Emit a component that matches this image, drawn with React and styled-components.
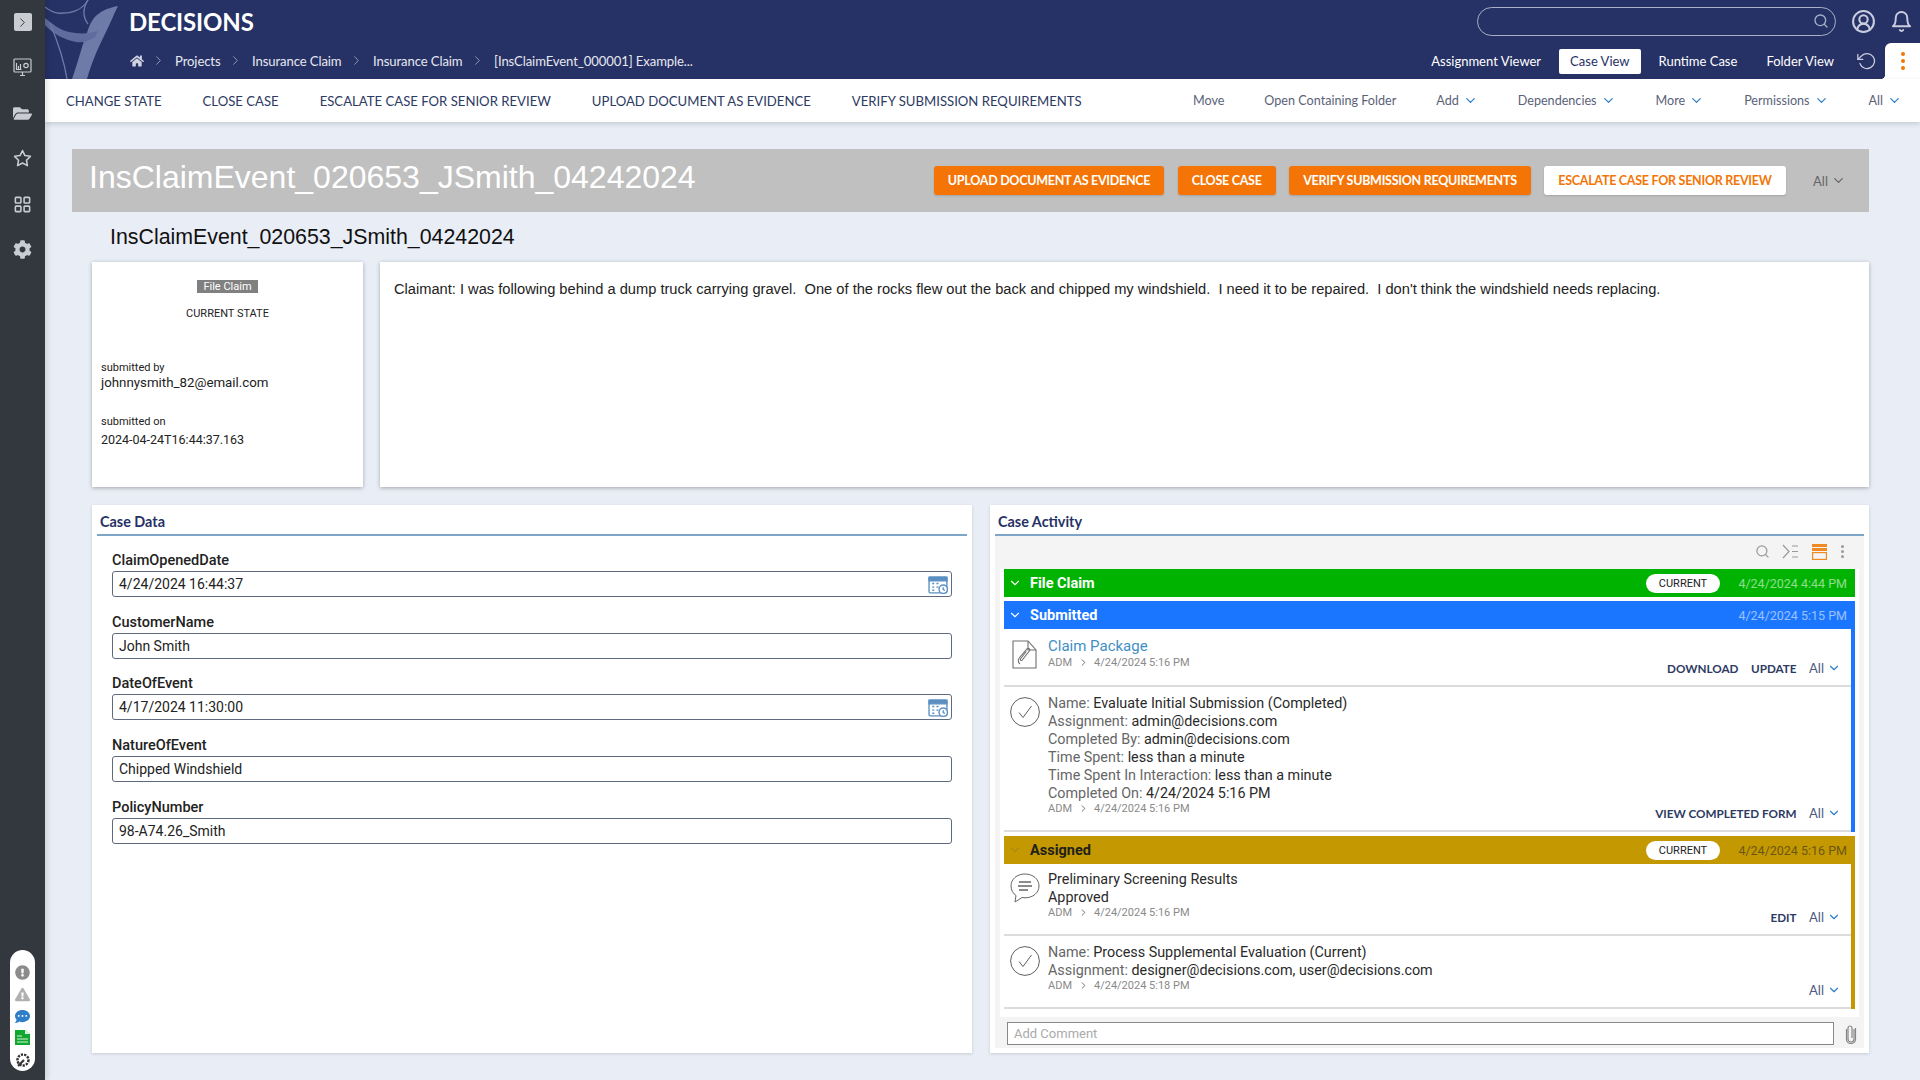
import React from "react";
import styled, { createGlobalStyle } from "styled-components";
import { FaHome, FaFolderOpen, FaCog, FaExclamationCircle, FaExclamationTriangle, FaCommentDots } from "react-icons/fa";
import { FiSearch, FiStar, FiChevronRight, FiChevronDown, FiBell, FiRotateCcw } from "react-icons/fi";
import { LuLayoutGrid, LuCircleUserRound } from "react-icons/lu";

const GlobalStyle = createGlobalStyle`
  html, body {
    margin: 0;
    padding: 0;
    height: 100%;
    overflow: hidden;
    background: #e9edf5;
    font-family: "Roboto", "Liberation Sans", sans-serif;
  }
  * { box-sizing: border-box; }
`;

const SIDE_ICONS = [
  { key: "folder", icon: <FaFolderOpen /> },
  { key: "star", icon: <FiStar /> },
  { key: "grid", icon: <LuLayoutGrid /> },
  { key: "gear", icon: <FaCog /> },
];

const CRUMBS = ["Projects", "Insurance Claim", "Insurance Claim", "[InsClaimEvent_000001] Example..."];
const TABS = ["Assignment Viewer", "Case View", "Runtime Case", "Folder View"];
const LEFT_ACTIONS = ["CHANGE STATE", "CLOSE CASE", "ESCALATE CASE FOR SENIOR REVIEW", "UPLOAD DOCUMENT AS EVIDENCE", "VERIFY SUBMISSION REQUIREMENTS"];
const RIGHT_ACTIONS = [
  { label: "Move" },
  { label: "Open Containing Folder" },
  { label: "Add", caret: true },
  { label: "Dependencies", caret: true },
  { label: "More", caret: true },
  { label: "Permissions", caret: true },
  { label: "All", caret: true },
];
const FIELDS = [
  { label: "ClaimOpenedDate", value: "4/24/2024 16:44:37", date: true },
  { label: "CustomerName", value: "John Smith" },
  { label: "DateOfEvent", value: "4/17/2024 11:30:00", date: true },
  { label: "NatureOfEvent", value: "Chipped Windshield" },
  { label: "PolicyNumber", value: "98-A74.26_Smith" },
];
const COMPLETED = [
  ["Name:", "Evaluate Initial Submission (Completed)"],
  ["Assignment:", "admin@decisions.com"],
  ["Completed By:", "admin@decisions.com"],
  ["Time Spent:", "less than a minute"],
  ["Time Spent In Interaction:", "less than a minute"],
  ["Completed On:", "4/24/2024 5:16 PM"],
];
const CURRENT = [
  ["Name:", "Process Supplemental Evaluation (Current)"],
  ["Assignment:", "designer@decisions.com, user@decisions.com"],
];

const Logo = () => (
  <LogoWrap viewBox="0 0 80 79" aria-hidden="true">
    <path d="M73 6 C62 8 54 12 49 18 C45 23 43 29 42 33 C38 42 33 62 27 79 L42 79 C46 64 52 50 60 34 C65 24 69 14 73 6 Z" fill="#6d7ba8" />
    <path d="M0 18 C8 24 14 30 24 32 C34 34 44 34 53 31 L50 37 C44 41 38 43 31 42 C20 40 8 34 0 25 Z" fill="#5f6d9e" />
    <path d="M0 7 C6 12 12 14 18 13 C28 13 38 9 43 0" fill="none" stroke="#6d7ba8" strokeWidth="1.300" />
    <path d="M43 0 C38 8 37 16 43 24" fill="none" stroke="#6d7ba8" strokeWidth="1.300" />
    <path d="M5 23 C12 40 19 60 22 79" fill="none" stroke="#6d7ba8" strokeWidth="1.300" />
  </LogoWrap>
);

const MonitorIcon = () => (
  <svg width="19" height="19" viewBox="0 0 19 19" fill="none" stroke="#c9ccd0" strokeWidth="1.2">
    <rect x="1" y="1" width="17" height="13" rx="1" />
    <path d="M3.5 5v6.5h5M5.5 11V8M7.5 11V6" />
    <circle cx="13" cy="7.5" r="2.2" />
    <path d="M7 17.5h5M9.5 14v3.5" />
  </svg>
);

const CalendarIcon = () => (
  <CalendarSvg viewBox="0 0 20 20" fill="none" stroke="#5b8fc2" strokeWidth="1.3">
    <rect x="1" y="3" width="17" height="15" rx="1" />
    <path d="M1 3h17v3.5H1z" fill="#5b8fc2" />
    <path d="M4 9h2M8 9h2M4 12.5h2M8 12.5h2M4 15.5h2" />
    <circle cx="14.5" cy="14.5" r="4" fill="#fff" />
    <path d="M14.5 12.5v2.2l1.5 1" />
  </CalendarSvg>
);

const FileClipIcon = () => (
  <svg width="25" height="29" viewBox="0 0 25 29" fill="none" stroke="#6f6f6f" strokeWidth="1.100">
    <path d="M1 1h15l8 9v18H1z" />
    <path d="M16 1v9h8" />
    <path d="M8 24c-2.500-2-2-4.500 0-7l7-8c1.500-1.500 3.500 0 2.300 2l-7 9c-1 1.200-2.500 0-1.500-1.500l5.500-7" />
  </svg>
);

const CheckCircle = () => (
  <svg width="30" height="30" viewBox="0 0 30 30" fill="none" stroke="#5f5f5f" strokeWidth="1">
    <circle cx="15" cy="15" r="14.400" />
    <path d="M9 15.500l4 5L21.500 9" />
  </svg>
);

const CommentIcon = () => (
  <svg width="30" height="30" viewBox="0 0 30 30" fill="none" stroke="#666" strokeWidth="1">
    <path d="M15 1C7 1 1 6 1 13c0 4 2 7.500 5 9.500L5 29l7-4.500c1 .2 2 .3 3 .3 8 0 14-5 14-11.800S23 1 15 1z" />
    <path d="M9 9h12M8 13h14M9 17h9" strokeWidth="1.400" />
  </svg>
);

const NotesIcon = () => (
  <svg width="15" height="15" viewBox="0 0 15 15">
    <path d="M0 0h10l5 4v11H0z" fill="#10a82f" />
    <path d="M10 0v4h5z" fill="#d8f0dc" />
    <path d="M2 6h5M2 9h11M2 12h11" stroke="#d8f0dc" strokeWidth="1.200" />
  </svg>
);

const ToolsIcon = () => (
  <svg width="16" height="16" viewBox="0 0 16 16" fill="none" stroke="#333">
    <circle cx="8" cy="8" r="5.500" strokeDasharray="2.200 1.100" strokeWidth="2.500" />
    <path d="M3 14l6-6" strokeWidth="2.200" />
  </svg>
);

const RowsIcon = () => (
  <svg width="15" height="16" viewBox="0 0 15 16">
    <path d="M0 0h15v3H0zM0 4h15v3H0z" fill="#f08a24" />
    <rect x=".6" y="8.600" width="13.800" height="6.800" fill="none" stroke="#f08a24" strokeWidth="1.200" />
  </svg>
);

const ListToggleIcon = () => (
  <svg width="17" height="15" viewBox="0 0 17 15" fill="none" stroke="#9a9a9a" strokeWidth="1.200">
    <path d="M1 1l6 6.500L1 14M10 2h6M10 7.500h6M10 13h6" />
  </svg>
);

const ClipIcon = () => (
  <svg width="12" height="20" viewBox="0 0 12 20" fill="none" stroke="#858585" strokeWidth="1.200">
    <path d="M9 5v10a3 3 0 0 1-6 0V4a2 2 0 0 1 4 0v10" />
    <path d="M1.500 5v10.500a4.500 4 0 0 0 9 0V4" />
  </svg>
);

const AllMenu = ({ label = "All" }) => (
  <AllLink>
    {label}
    <FiChevronDown />
  </AllLink>
);

const Meta = ({ date }) => (
  <MetaLine>
    ADM
    <FiChevronRight />
    {date}
  </MetaLine>
);

const Section = ({ color, title, date, current, muted, children }) => (
  <SectionWrap>
    <SectionBar $color={color} $muted={muted}>
      <FiChevronDown />
      <SectionTitle>{title}</SectionTitle>
      {current && <CurrentPill>CURRENT</CurrentPill>}
      <SectionDate>{date}</SectionDate>
    </SectionBar>
    <SectionBody $color={color}>{children}</SectionBody>
  </SectionWrap>
);

const App = () => {
  return (
    <Page>
      <GlobalStyle />
      <Sidebar>
        <ExpandButton>
          <FiChevronRight />
        </ExpandButton>
        <SideIcon>
          <MonitorIcon />
        </SideIcon>
        {SIDE_ICONS.map((item) => (
          <SideIcon key={item.key}>{item.icon}</SideIcon>
        ))}
        <ToolPill>
          <FaExclamationCircle color="#8c8c8c" />
          <FaExclamationTriangle color="#b0b0b0" />
          <FaCommentDots color="#2f7fc8" />
          <NotesIcon />
          <ToolsIcon />
        </ToolPill>
      </Sidebar>

      <Main>
        <Header>
          <Logo />
          <HeaderRow>
            <Brand>DECISIONS</Brand>
            <SearchBox>
              <FiSearch />
            </SearchBox>
            <HeaderIcon $size={25}>
              <LuCircleUserRound />
            </HeaderIcon>
            <HeaderIcon $size={23}>
              <FiBell />
            </HeaderIcon>
          </HeaderRow>
          <HeaderRow>
            <Breadcrumbs>
              <FaHome />
              {CRUMBS.map((crumb, i) => (
                <React.Fragment key={i}>
                  <FiChevronRight />
                  <span>{crumb}</span>
                </React.Fragment>
              ))}
            </Breadcrumbs>
            <Tabs>
              {TABS.map((tab) => (
                <Tab key={tab} $active={tab === "Case View"}>
                  {tab}
                </Tab>
              ))}
            </Tabs>
            <RefreshIcon>
              <FiRotateCcw />
            </RefreshIcon>
            <KebabTab>
              <i />
              <i />
              <i />
            </KebabTab>
          </HeaderRow>
        </Header>

        <ActionBar>
          {LEFT_ACTIONS.map((a) => (
            <ActionLink key={a}>{a}</ActionLink>
          ))}
          <ActionRight>
            {RIGHT_ACTIONS.map((a) => (
              <ActionMenu key={a.label}>
                {a.label}
                {a.caret && <FiChevronDown />}
              </ActionMenu>
            ))}
          </ActionRight>
        </ActionBar>

        <Content>
          <TitleBar>
            <TitleText>InsClaimEvent_020653_JSmith_04242024</TitleText>
            <OrangeButton>UPLOAD DOCUMENT AS EVIDENCE</OrangeButton>
            <OrangeButton>CLOSE CASE</OrangeButton>
            <OrangeButton>VERIFY SUBMISSION REQUIREMENTS</OrangeButton>
            <OrangeButton $light>ESCALATE CASE FOR SENIOR REVIEW</OrangeButton>
            <TitleAll>
              All
              <FiChevronDown />
            </TitleAll>
          </TitleBar>
          <SubTitle>InsClaimEvent_020653_JSmith_04242024</SubTitle>

          <Inner>
            <TopRow>
              <StateCard>
                <StateChip>File Claim</StateChip>
                <StateLabel>CURRENT STATE</StateLabel>
                <SmallLabel>submitted by</SmallLabel>
                <SmallValue>johnnysmith_82@email.com</SmallValue>
                <SmallLabel $gap={25}>submitted on</SmallLabel>
                <SmallValue $gap={4} $size={12.5}>2024-04-24T16:44:37.163</SmallValue>
              </StateCard>
              <ClaimCard>
                Claimant: I was following behind a dump truck carrying gravel.&nbsp; One of the rocks flew out the back and
                chipped my windshield.&nbsp; I need it to be repaired.&nbsp; I don't think the windshield needs replacing.
              </ClaimCard>
            </TopRow>

            <BottomRow>
              <Panel>
                <PanelTitle>Case Data</PanelTitle>
                <FieldList>
                  {FIELDS.map((f) => (
                    <Field key={f.label}>
                      <FieldLabel>{f.label}</FieldLabel>
                      <FieldInput>
                        {f.value}
                        {f.date && <CalendarIcon />}
                      </FieldInput>
                    </Field>
                  ))}
                </FieldList>
              </Panel>

              <Panel>
                <PanelTitle>Case Activity</PanelTitle>
                <ActivityArea>
                  <ActivityTools>
                    <FiSearch />
                    <ListToggleIcon />
                    <RowsIcon />
                    <ToolDots>
                      <i />
                      <i />
                      <i />
                    </ToolDots>
                  </ActivityTools>
                  <Timeline>
                    <Section color="#00b300" title="File Claim" date="4/24/2024 4:44 PM" current />
                    <Section color="#1a75ff" title="Submitted" date="4/24/2024 5:15 PM">
                      <ActivityRow $height={58} $pad={7}>
                        <RowIcon $top={4} $left={8}>
                          <FileClipIcon />
                        </RowIcon>
                        <RowText>
                          <FileLink>Claim Package</FileLink>
                          <Meta date="4/24/2024 5:16 PM" />
                        </RowText>
                        <RowActions>
                          <ActionWord>DOWNLOAD</ActionWord>
                          <ActionWord>UPDATE</ActionWord>
                          <AllMenu />
                        </RowActions>
                      </ActivityRow>
                      <ActivityRow $height={145}>
                        <RowIcon $top={2}>
                          <CheckCircle />
                        </RowIcon>
                        <RowText>
                          {COMPLETED.map(([k, v]) => (
                            <InfoLine key={k}>
                              {k} <b>{v}</b>
                            </InfoLine>
                          ))}
                          <Meta date="4/24/2024 5:16 PM" />
                        </RowText>
                        <RowActions>
                          <ActionWord>VIEW COMPLETED FORM</ActionWord>
                          <AllMenu />
                        </RowActions>
                      </ActivityRow>
                    </Section>
                    <Section color="#c49800" title="Assigned" date="4/24/2024 5:16 PM" current muted>
                      <ActivityRow $height={72} $pad={7}>
                        <RowIcon $top={2}>
                          <CommentIcon />
                        </RowIcon>
                        <RowText>
                          <InfoLine><b>Preliminary Screening Results</b></InfoLine>
                          <InfoLine><b>Approved</b></InfoLine>
                          <Meta date="4/24/2024 5:16 PM" />
                        </RowText>
                        <RowActions>
                          <ActionWord>EDIT</ActionWord>
                          <AllMenu />
                        </RowActions>
                      </ActivityRow>
                      <ActivityRow $height={73}>
                        <RowIcon $top={2}>
                          <CheckCircle />
                        </RowIcon>
                        <RowText>
                          {CURRENT.map(([k, v]) => (
                            <InfoLine key={k}>
                              {k} <b>{v}</b>
                            </InfoLine>
                          ))}
                          <Meta date="4/24/2024 5:18 PM" />
                        </RowText>
                        <RowActions>
                          <AllMenu />
                        </RowActions>
                      </ActivityRow>
                    </Section>
                  </Timeline>
                  <CommentRow>
                    <CommentBox>Add Comment</CommentBox>
                    <ClipIcon />
                  </CommentRow>
                </ActivityArea>
              </Panel>
            </BottomRow>
          </Inner>
        </Content>
      </Main>
    </Page>
  );
};

const Page = styled.div`
  display: flex;
  width: 1920px;
  height: 1080px;
  overflow: hidden;
  background: #e9edf5;
`;

const Sidebar = styled.div`
  width: 45px;
  flex-shrink: 0;
  background: #32383e;
  display: flex;
  flex-direction: column;
  align-items: center;
  padding-top: 13px;
  position: relative;
  box-shadow: 3px 0 5px rgba(0, 0, 0, 0.1);
  z-index: 3;
`;

const ExpandButton = styled.div`
  width: 18px;
  height: 18px;
  border-radius: 2px;
  background: #c9ccd0;
  color: #32383e;
  display: flex;
  align-items: center;
  justify-content: center;
  font-size: 15px;
  margin-bottom: 27px;
  svg {
    stroke-width: 1.500px;
  }
`;

const SideIcon = styled.div`
  height: 19px;
  margin-bottom: 26.500px;
  color: #c9ccd0;
  font-size: 19px;
  display: flex;
  align-items: center;
  justify-content: center;
`;

const ToolPill = styled.div`
  position: absolute;
  left: 10px;
  top: 950px;
  width: 25px;
  height: 121px;
  border-radius: 13px;
  background: #fff;
  display: flex;
  flex-direction: column;
  align-items: center;
  justify-content: space-between;
  padding: 15px 0 3px;
  font-size: 15px;
`;

const Main = styled.div`
  flex: 1;
  min-width: 0;
  display: flex;
  flex-direction: column;
`;

const Header = styled.div`
  position: relative;
  height: 79px;
  background: #263165;
  color: #fff;
  overflow: hidden;
  font-family: "Lato", sans-serif;
`;

const LogoWrap = styled.svg`
  position: absolute;
  left: 0;
  top: 0;
  width: 80px;
  height: 79px;
`;

const HeaderRow = styled.div`
  position: relative;
  display: flex;
  align-items: center;
  padding-left: 84px;
  &:first-of-type {
    height: 43px;
  }
  height: 36px;
`;

const Brand = styled.div`
  font-size: 24px;
  font-weight: 700;
  letter-spacing: -0.15px;
  flex: 1;
`;

const SearchBox = styled.div`
  width: 359px;
  height: 29px;
  border: 1px solid #a9b0c8;
  border-radius: 15px;
  display: flex;
  align-items: center;
  justify-content: flex-end;
  padding-right: 6px;
  color: #a9b0c8;
  font-size: 16px;
  margin: -1px 11px 0 0;
`;

const HeaderIcon = styled.div`
  display: flex;
  color: #c9cde0;
  font-size: ${(p) => p.$size}px;
  margin-right: 7px;
  margin-left: 4px;
  &:last-child {
    margin-left: 7px;
  }
`;

const Breadcrumbs = styled.div`
  display: flex;
  align-items: center;
  flex: 1;
  font-size: 13.100px;
  color: #e6e8f0;
  margin-top: -1px;
  letter-spacing: -0.1px;
  & > svg:first-child {
    color: #cfd3e2;
    font-size: 14px;
    margin-left: 1px;
    margin-right: 7px;
  }
  & > svg {
    color: #a9b0cc;
    font-size: 15px;
    stroke-width: 1.300px;
    margin-right: 9px;
  }
  & > span {
    margin-right: 7.500px;
  }
`;

const Tabs = styled.div`
  display: flex;
  align-items: center;
  font-size: 13px;
  margin-right: 5px;
`;

const Tab = styled.div`
  height: 25px;
  padding: 0 11px;
  margin-right: 7px;
  line-height: 25px;
  border-radius: 2px;
  white-space: nowrap;
  background: ${(p) => (p.$active ? "#fff" : "transparent")};
  color: ${(p) => (p.$active ? "#263165" : "#fff")};
`;

const RefreshIcon = styled.div`
  display: flex;
  font-size: 20px;
  color: #c9cde0;
  margin-right: 8px;
  svg {
    stroke-width: 1.500px;
  }
`;

const KebabTab = styled.div`
  position: relative;
  width: 35px;
  height: 36px;
  background: #fff;
  border-top-left-radius: 6px;
  display: flex;
  flex-direction: column;
  align-items: center;
  justify-content: center;
  gap: 3px;
  &::before {
    content: "";
    position: absolute;
    left: -5px;
    bottom: 0;
    width: 5px;
    height: 5px;
    background: radial-gradient(circle at 0 0, transparent 5px, #fff 5.500px);
  }
  i {
    width: 4px;
    height: 4px;
    border-radius: 50%;
    background: #f47506;
  }
`;

const ActionBar = styled.div`
  position: relative;
  height: 43px;
  flex-shrink: 0;
  background: #fff;
  display: flex;
  align-items: center;
  padding: 0 18px 0 21px;
  gap: 41px;
  font-family: "Lato", sans-serif;
  font-size: 13.150px;
  box-shadow: 0 2px 5px rgba(0, 0, 0, 0.15);
  z-index: 2;
`;

const ActionLink = styled.div`
  color: #2d3a63;
  white-space: nowrap;
`;

const ActionRight = styled.div`
  margin-left: auto;
  display: flex;
  align-items: center;
  gap: 40px;
`;

const ActionMenu = styled.div`
  display: flex;
  align-items: center;
  gap: 4px;
  color: #5a6278;
  font-size: 12.600px;
  white-space: nowrap;
  svg {
    color: #2f7fc8;
    font-size: 15px;
  }
`;

const Content = styled.div`
  flex: 1;
  min-height: 0;
  padding: 27px 51px 0 27px;
`;

const TitleBar = styled.div`
  height: 63px;
  background: #c0c0c0;
  display: flex;
  align-items: center;
  padding: 0 23px 0 17px;
`;

const TitleText = styled.div`
  flex: 1;
  font-family: "Liberation Sans", sans-serif;
  font-size: 32px;
  color: #fff;
  padding-bottom: 7px;
`;

const OrangeButton = styled.div`
  height: 29px;
  line-height: 29px;
  padding: 0 14px;
  margin-right: 13.500px;
  border-radius: 3px;
  font-family: "Lato", sans-serif;
  font-size: 12.500px;
  font-weight: 700;
  letter-spacing: -0.27px;
  white-space: nowrap;
  background: ${(p) => (p.$light ? "#fff" : "#f47506")};
  color: ${(p) => (p.$light ? "#f47506" : "#fff")};
  box-shadow: 0 1px 2px rgba(0, 0, 0, 0.15);
`;

const TitleAll = styled.div`
  display: flex;
  align-items: center;
  gap: 3px;
  margin-left: 14px;
  font-family: "Lato", sans-serif;
  font-size: 13px;
  color: #666;
  svg {
    font-size: 15px;
  }
`;

const SubTitle = styled.div`
  height: 50px;
  line-height: 50px;
  padding-left: 38px;
  font-family: "Liberation Sans", sans-serif;
  font-size: 21.350px;
  color: #111;
`;

const Inner = styled.div`
  padding-left: 20px;
`;

const TopRow = styled.div`
  display: flex;
  gap: 17px;
  height: 225px;
`;

const StateCard = styled.div`
  width: 271px;
  background: #fff;
  padding: 18px 9px 0;
  display: flex;
  flex-direction: column;
  box-shadow: 0 1px 4px rgba(0, 0, 0, 0.3);
`;

const StateChip = styled.div`
  align-self: center;
  background: #808080;
  color: #fff;
  font-size: 11px;
  line-height: 13px;
  padding: 0 6px;
`;

const StateLabel = styled.div`
  align-self: center;
  margin-top: 14px;
  margin-bottom: 41px;
  font-size: 11px;
  line-height: 13px;
  color: #222;
`;

const SmallLabel = styled.div`
  font-size: 11px;
  line-height: 13px;
  color: #222;
  margin-top: ${(p) => p.$gap || 0}px;
`;

const SmallValue = styled.div`
  font-size: ${(p) => p.$size || 13.3}px;
  line-height: 15px;
  color: #222;
  margin-top: ${(p) => p.$gap || 1}px;
`;

const ClaimCard = styled.div`
  flex: 1;
  background: #fff;
  padding: 18px 14px;
  font-family: "Liberation Sans", sans-serif;
  font-size: 14.670px;
  line-height: 18px;
  color: #222;
  box-shadow: 0 1px 4px rgba(0, 0, 0, 0.3);
`;

const BottomRow = styled.div`
  display: grid;
  grid-template-columns: 880px 879px;
  gap: 18px;
  margin-top: 18px;
  height: 548px;
`;

const Panel = styled.div`
  background: #fff;
  padding: 0 5px 5px;
  display: flex;
  flex-direction: column;
  box-shadow: 0 1px 3px rgba(0, 0, 0, 0.15);
`;

const PanelTitle = styled.div`
  height: 31px;
  flex-shrink: 0;
  line-height: 33px;
  padding-left: 3px;
  border-bottom: 2px solid #7ea6c9;
  font-family: "Lato", sans-serif;
  font-size: 14.400px;
  font-weight: 700;
  color: #263165;
`;

const FieldList = styled.div`
  padding: 16px 15px 0 15px;
`;

const Field = styled.div`
  height: 61.700px;
`;

const FieldLabel = styled.div`
  font-size: 14.500px;
  line-height: 17px;
  font-weight: 500;
  color: #222;
`;

const FieldInput = styled.div`
  margin-top: 2px;
  height: 26px;
  border: 1px solid #5e6a80;
  border-radius: 3px;
  padding: 0 6px;
  display: flex;
  align-items: center;
  justify-content: space-between;
  font-size: 14px;
  color: #222;
`;

const CalendarSvg = styled.svg`
  width: 21px;
  height: 21px;
  margin-right: -4px;
`;

const ActivityArea = styled.div`
  flex: 1;
  min-height: 0;
  background: #f4f4f4;
  display: flex;
  flex-direction: column;
`;

const ActivityTools = styled.div`
  height: 33px;
  flex-shrink: 0;
  display: flex;
  align-items: center;
  justify-content: flex-end;
  gap: 12.500px;
  padding: 0 20px 2px 0;
  color: #9a9a9a;
  font-size: 15px;
`;

const ToolDots = styled.div`
  display: flex;
  flex-direction: column;
  gap: 2px;
  margin-left: 2px;
  i {
    width: 3px;
    height: 3px;
    border-radius: 50%;
    background: #9a9a9a;
  }
`;

const Timeline = styled.div`
  margin: 0 5px 0 5px;
  padding: 0 4px 8px;
  background: #fff;
  display: flex;
  flex-direction: column;
  gap: 4px;
`;

const SectionWrap = styled.div`
  display: flex;
  flex-direction: column;
`;

const SectionBar = styled.div`
  height: 28px;
  background: ${(p) => p.$color};
  display: flex;
  align-items: center;
  padding: 0 8px 0 4px;
  color: ${(p) => (p.$muted ? "#1f1f1f" : "#fff")};
  & > svg {
    font-size: 14px;
    margin-right: 8px;
    color: ${(p) => (p.$muted ? "#ad8a12" : "#fff")};
  }
`;

const SectionTitle = styled.div`
  flex: 1;
  font-size: 14.500px;
  font-weight: 700;
`;

const CurrentPill = styled.div`
  width: 74px;
  height: 19px;
  line-height: 19px;
  border-radius: 10px;
  background: #fff;
  color: #222;
  text-align: center;
  font-size: 11px;
  margin-right: 18px;
`;

const SectionDate = styled.div`
  width: 109px;
  text-align: right;
  font-size: 12.500px;
  opacity: 0.55;
`;

const SectionBody = styled.div`
  border-right: ${(p) => (p.children ? `4px solid ${p.$color}` : "none")};
`;

const ActivityRow = styled.div`
  min-height: ${(p) => p.$height}px;
  display: flex;
  border-bottom: 2px solid #dcdcdc;
  padding: ${(p) => p.$pad || 8}px 10px 8px 0;
`;

const RowIcon = styled.div`
  width: 44px;
  padding-top: ${(p) => p.$top}px;
  padding-left: ${(p) => p.$left || 6}px;
  flex-shrink: 0;
`;

const RowText = styled.div`
  flex: 1;
`;

const FileLink = styled.div`
  font-size: 15px;
  line-height: 21px;
  color: #3f8fc6;
`;

const InfoLine = styled.div`
  font-size: 14.350px;
  line-height: 18px;
  color: #666;
  b {
    font-weight: 400;
    color: #2a2a2a;
  }
`;

const MetaLine = styled.div`
  display: flex;
  align-items: center;
  gap: 5.500px;
  margin-top: -1px;
  font-size: 11px;
  line-height: 13px;
  color: #8a8a8a;
  svg {
    font-size: 11px;
    color: #666;
  }
`;

const RowActions = styled.div`
  align-self: flex-end;
  display: flex;
  align-items: center;
  gap: 12.500px;
  margin-bottom: 1px;
`;

const ActionWord = styled.div`
  font-family: "Lato", sans-serif;
  font-size: 11.700px;
  font-weight: 700;
  color: #2d3a63;
`;

const AllLink = styled.div`
  display: flex;
  align-items: center;
  gap: 3px;
  font-family: "Lato", sans-serif;
  font-size: 13px;
  color: #4b5a80;
  svg {
    color: #2f7fc8;
    font-size: 14px;
  }
`;

const CommentRow = styled.div`
  display: flex;
  align-items: center;
  gap: 11px;
  margin-top: 5px;
  padding: 0 7px 0 12px;
`;

const CommentBox = styled.div`
  flex: 1;
  height: 23px;
  line-height: 21px;
  background: #fff;
  border: 1px solid #888;
  padding-left: 6px;
  font-size: 13px;
  color: #aaa;
`;

export default App;
